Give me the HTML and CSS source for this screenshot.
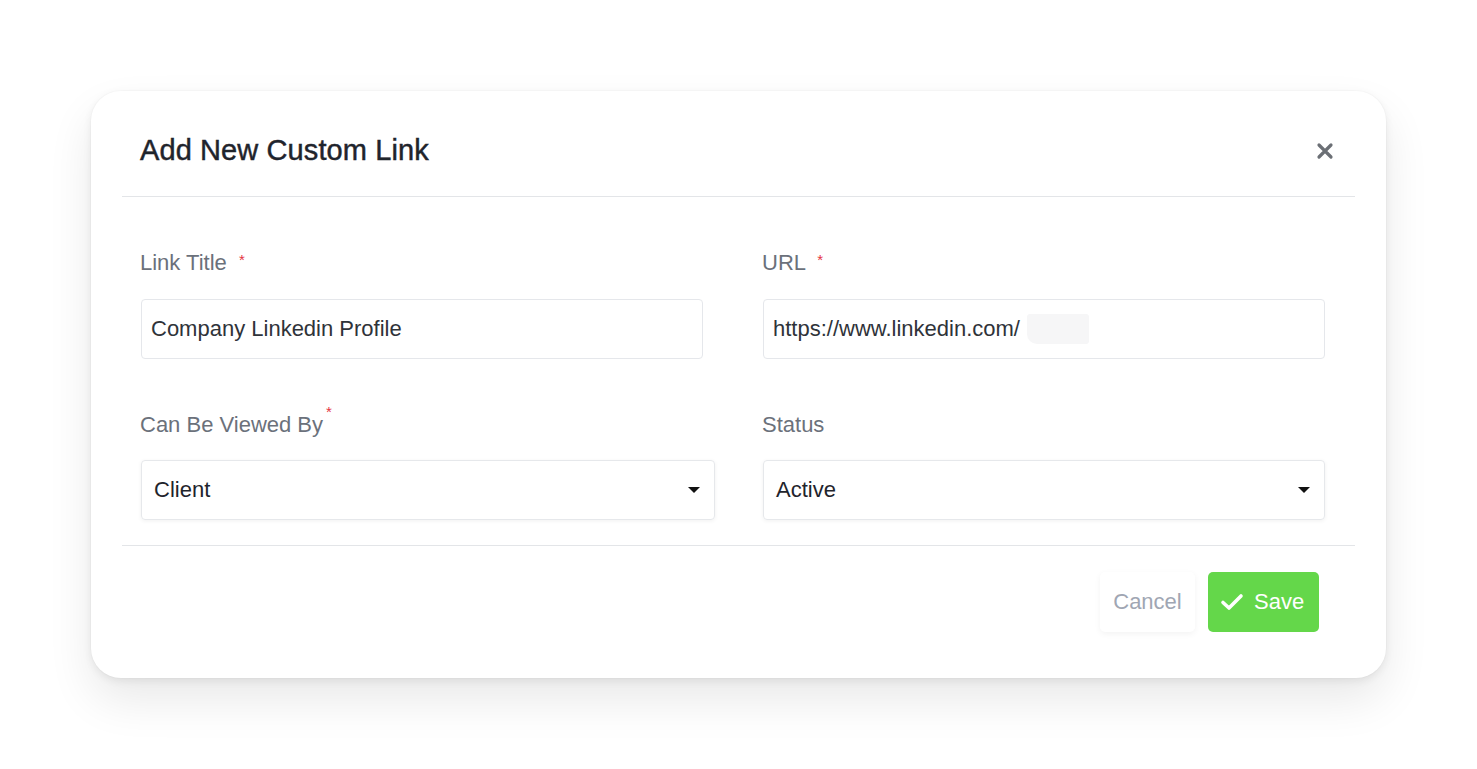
FILE: index.html
```html
<!DOCTYPE html>
<html lang="en">
<head>
<meta charset="utf-8">
<title>Add New Custom Link</title>
<link rel="stylesheet" href="styles.css">
</head>
<body>
<div class="page">
  <div class="modal">
    <div class="modal-header">
      <h2 class="modal-title">Add New Custom Link</h2>
      <button class="close-btn" aria-label="Close">
        <svg width="18" height="18" viewBox="0 0 18 18"><path d="M3 3 L15 15 M15 3 L3 15" stroke="#6b6f75" stroke-width="3.2" stroke-linecap="round"/></svg>
      </button>
    </div>
    <div class="divider"></div>
    <div class="modal-body">
      <div class="field">
        <label class="label">Link Title <span class="req req-spaced">*</span></label>
        <div class="input">Company Linkedin Profile</div>
      </div>
      <div class="field">
        <label class="label">URL <span class="req req-spaced">*</span></label>
        <div class="input">https://www.linkedin.com/<span class="blur"></span></div>
      </div>
      <div class="field field-second">
        <label class="label">Can Be Viewed By<span class="req req-sup">*</span></label>
        <div class="select select-wide"><span>Client</span><span class="caret"></span></div>
      </div>
      <div class="field field-second">
        <label class="label">Status</label>
        <div class="select"><span>Active</span><span class="caret"></span></div>
      </div>
    </div>
    <div class="divider"></div>
    <div class="modal-footer">
      <button class="btn btn-cancel">Cancel</button>
      <button class="btn btn-save">
        <svg width="24" height="20" viewBox="0 0 24 20"><path d="M3 10.5 L9 16 L21 4" stroke="#ffffff" stroke-width="3.6" fill="none" stroke-linecap="round" stroke-linejoin="round"/></svg>
        <span>Save</span>
      </button>
    </div>
  </div>
</div>
</body>
</html>
```

FILE: styles.css
```css
* { box-sizing: border-box; }
html, body { margin: 0; padding: 0; background: #ffffff; }
body {
  font-family: "Liberation Sans", Arial, Helvetica, sans-serif;
  color: #2b2f36;
}
.page {
  padding: 91px 0 91px 91px;
  min-height: 100vh;
}
.modal {
  width: 1295px;
  height: 587px;
  background: #ffffff;
  border-radius: 30px;
  box-shadow: 0 22px 46px rgba(0, 0, 0, 0.09), 0 3px 8px rgba(0, 0, 0, 0.07), 0 0 0 1px rgba(0, 0, 0, 0.015);
}
.modal-header {
  display: flex;
  align-items: center;
  justify-content: space-between;
  padding: 44px 52px 31px 49px;
}
.modal-title {
  margin: 0;
  font-size: 29px;
  line-height: 30px;
  font-weight: 400;
  letter-spacing: 0.1px;
  color: #1f242c;
  -webkit-text-stroke: 0.45px #1f242c;
}
.close-btn {
  border: 0;
  background: transparent;
  padding: 0;
  width: 18px;
  height: 18px;
  display: flex;
  margin-top: 2px;
  cursor: pointer;
}
.divider {
  height: 1px;
  background: #e3e5e8;
  margin: 0 31px;
}
.modal-body {
  display: grid;
  grid-template-columns: 563px 563px;
  column-gap: 59px;
  row-gap: 53px;
  padding: 53px 0 25px 49px;
}
.field {
  display: flex;
  flex-direction: column;
  gap: 23px;
}
.field-second {
  gap: 22px;
}
.label {
  display: block;
  height: 26px;
  font-size: 22px;
  line-height: 26px;
  color: #6b717b;
  position: relative;
}
.req {
  color: #e5343f;
  font-size: 15px;
  line-height: 0;
  position: relative;
}
.req-spaced {
  margin-left: 6px;
  top: -5px;
}
.req-sup {
  margin-left: 3px;
  top: -15px;
}
.input {
  height: 60px;
  margin-left: 1px;
  border: 1px solid #e5e7eb;
  border-radius: 4px;
  padding: 0 9px;
  display: flex;
  align-items: center;
  font-size: 22px;
  color: #2f3339;
}
.blur {
  display: inline-block;
  width: 62px;
  height: 30px;
  background: #f6f6f7;
  border-radius: 3px 3px 3px 10px;
  margin-left: 7px;
}
.select {
  height: 60px;
  margin-left: 1px;
  border: 1px solid #e6e8eb;
  border-radius: 4px;
  padding: 0 14px 0 12px;
  display: flex;
  align-items: center;
  justify-content: space-between;
  font-size: 22px;
  color: #1f242c;
  box-shadow: 0 1px 4px rgba(0, 0, 0, 0.06);
}
.select-wide {
  width: 574px;
}
.caret {
  width: 0;
  height: 0;
  border-left: 6px solid transparent;
  border-right: 6px solid transparent;
  border-top: 6px solid #111111;
}
.modal-footer {
  display: flex;
  justify-content: flex-end;
  gap: 13px;
  padding: 26px 67px 0 0;
}
.btn {
  font-family: "Liberation Sans", Arial, Helvetica, sans-serif;
  font-size: 22px;
  height: 60px;
  border: 0;
  border-radius: 5px;
  display: flex;
  align-items: center;
  cursor: pointer;
}
.btn-cancel {
  width: 95px;
  justify-content: center;
  background: #ffffff;
  color: #a0a6b3;
  box-shadow: 0 2px 6px rgba(0, 0, 0, 0.05);
}
.btn-save {
  width: 111px;
  padding: 0 0 0 12px;
  gap: 10px;
  background: #64d74a;
  color: #ffffff;
}
```
